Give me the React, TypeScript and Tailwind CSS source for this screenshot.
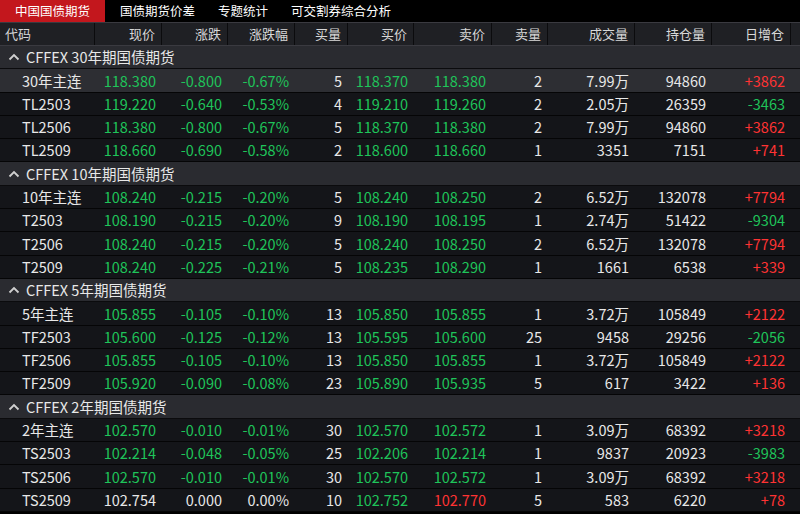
import React from "react";

type R = [string, string, string, string, string, string, string, string, string, string, string];
const groups: { title: string; rows: R[] }[] = [
  { title: "CFFEX 30年期国债期货", rows: [
    ["30年主连","118.380","-0.800","-0.67%","5","118.370","118.380","2","7.99万","94860","+3862"],
    ["TL2503","119.220","-0.640","-0.53%","4","119.210","119.260","2","2.05万","26359","-3463"],
    ["TL2506","118.380","-0.800","-0.67%","5","118.370","118.380","2","7.99万","94860","+3862"],
    ["TL2509","118.660","-0.690","-0.58%","2","118.600","118.660","1","3351","7151","+741"],
  ]},
  { title: "CFFEX 10年期国债期货", rows: [
    ["10年主连","108.240","-0.215","-0.20%","5","108.240","108.250","2","6.52万","132078","+7794"],
    ["T2503","108.190","-0.215","-0.20%","9","108.190","108.195","1","2.74万","51422","-9304"],
    ["T2506","108.240","-0.215","-0.20%","5","108.240","108.250","2","6.52万","132078","+7794"],
    ["T2509","108.240","-0.225","-0.21%","5","108.235","108.290","1","1661","6538","+339"],
  ]},
  { title: "CFFEX 5年期国债期货", rows: [
    ["5年主连","105.855","-0.105","-0.10%","13","105.850","105.855","1","3.72万","105849","+2122"],
    ["TF2503","105.600","-0.125","-0.12%","13","105.595","105.600","25","9458","29256","-2056"],
    ["TF2506","105.855","-0.105","-0.10%","13","105.850","105.855","1","3.72万","105849","+2122"],
    ["TF2509","105.920","-0.090","-0.08%","23","105.890","105.935","5","617","3422","+136"],
  ]},
  { title: "CFFEX 2年期国债期货", rows: [
    ["2年主连","102.570","-0.010","-0.01%","30","102.570","102.572","1","3.09万","68392","+3218"],
    ["TS2503","102.214","-0.048","-0.05%","25","102.206","102.214","1","9837","20923","-3983"],
    ["TS2506","102.570","-0.010","-0.01%","30","102.570","102.572","1","3.09万","68392","+3218"],
    ["TS2509","102.754","0.000","0.00%","10","102.752","102.770","5","583","6220","+78"],
  ]},
];

const widths = ["w-[95px]","w-[67px]","w-[66px]","w-[67px]","w-[53px]","w-[66px]","w-[78px]","w-[56px]","w-[87px]","w-[77px]","w-[79px]"];
const heads = ["代码","现价","涨跌","涨跌幅","买量","买价","卖价","卖量","成交量","持仓量","日增仓"];
const G = "text-[#1fc45a]";
const RED = "text-[#ff3333]";
const W = "text-[#e8e8e8]";

function color(i: number, r: R) {
  if (i === 0 || i === 4 || i === 7 || i === 8 || i === 9) return W;
  if (i === 10) return r[10].startsWith("+") ? RED : G;
  if (r[2] === "0.000") {
    if (i === 6) return RED;
    if (i === 5) return G;
    return W;
  }
  return G;
}

export default function App() {
  const tabs = ["中国国债期货","国债期货价差","专题统计","可交割券综合分析"];
  return (
    <div className="w-[800px] h-[514px] bg-black overflow-hidden text-[14.5px]" style={{ fontFamily: '"Noto Sans CJK SC", "Noto Sans", sans-serif' }}>
      <div className="flex h-[22px] items-center text-[12.5px] text-white">
        {tabs.map((t, i) => (
          <div key={t} className={`h-full flex items-center ${i === 0 ? "bg-[#c3171d] px-[15px]" : "pl-[15px] pr-[8px]"}`}>{t}</div>
        ))}
      </div>
      <div className="flex h-[24px] bg-[#1f2024] border-y border-[#3a3a40] text-[13px] text-[#d8d8d8]">
        {heads.map((h, i) => (
          <div key={h} className={`${widths[i]} flex items-center border-r border-[#0b0b0d] ${i === 0 ? "pl-[5px]" : "justify-end pr-[6px]"}`}>{h}</div>
        ))}
      </div>
      {groups.map((g) => (
        <div key={g.title}>
          <div className="h-[23.3px] bg-[#2a2b30] border-b border-[#0b0b0d] flex items-center text-[#e8e8e8] pl-[8px] gap-[6px]">
            <svg width="12" height="8" viewBox="0 0 12 8"><path d="M1.5 6.5 L6 2 L10.5 6.5" stroke="#d0d0d0" strokeWidth="1.8" fill="none" /></svg>
            <span>{g.title}</span>
          </div>
          {g.rows.map((r, ri) => (
            <div key={r[0]} className={`flex h-[23.3px] border-b border-[#050506] ${g.title.startsWith("CFFEX 30") && ri === 0 ? "bg-[#2d2e33]" : "bg-[#141519]"}`}>
              {r.map((c, i) => (
                <div key={i} className={`${widths[i]} flex items-center ${color(i, r)} ${i === 0 ? "pl-[22px]" : "justify-end pr-[6px]"}`}>{c}</div>
              ))}
            </div>
          ))}
        </div>
      ))}
    </div>
  );
}
